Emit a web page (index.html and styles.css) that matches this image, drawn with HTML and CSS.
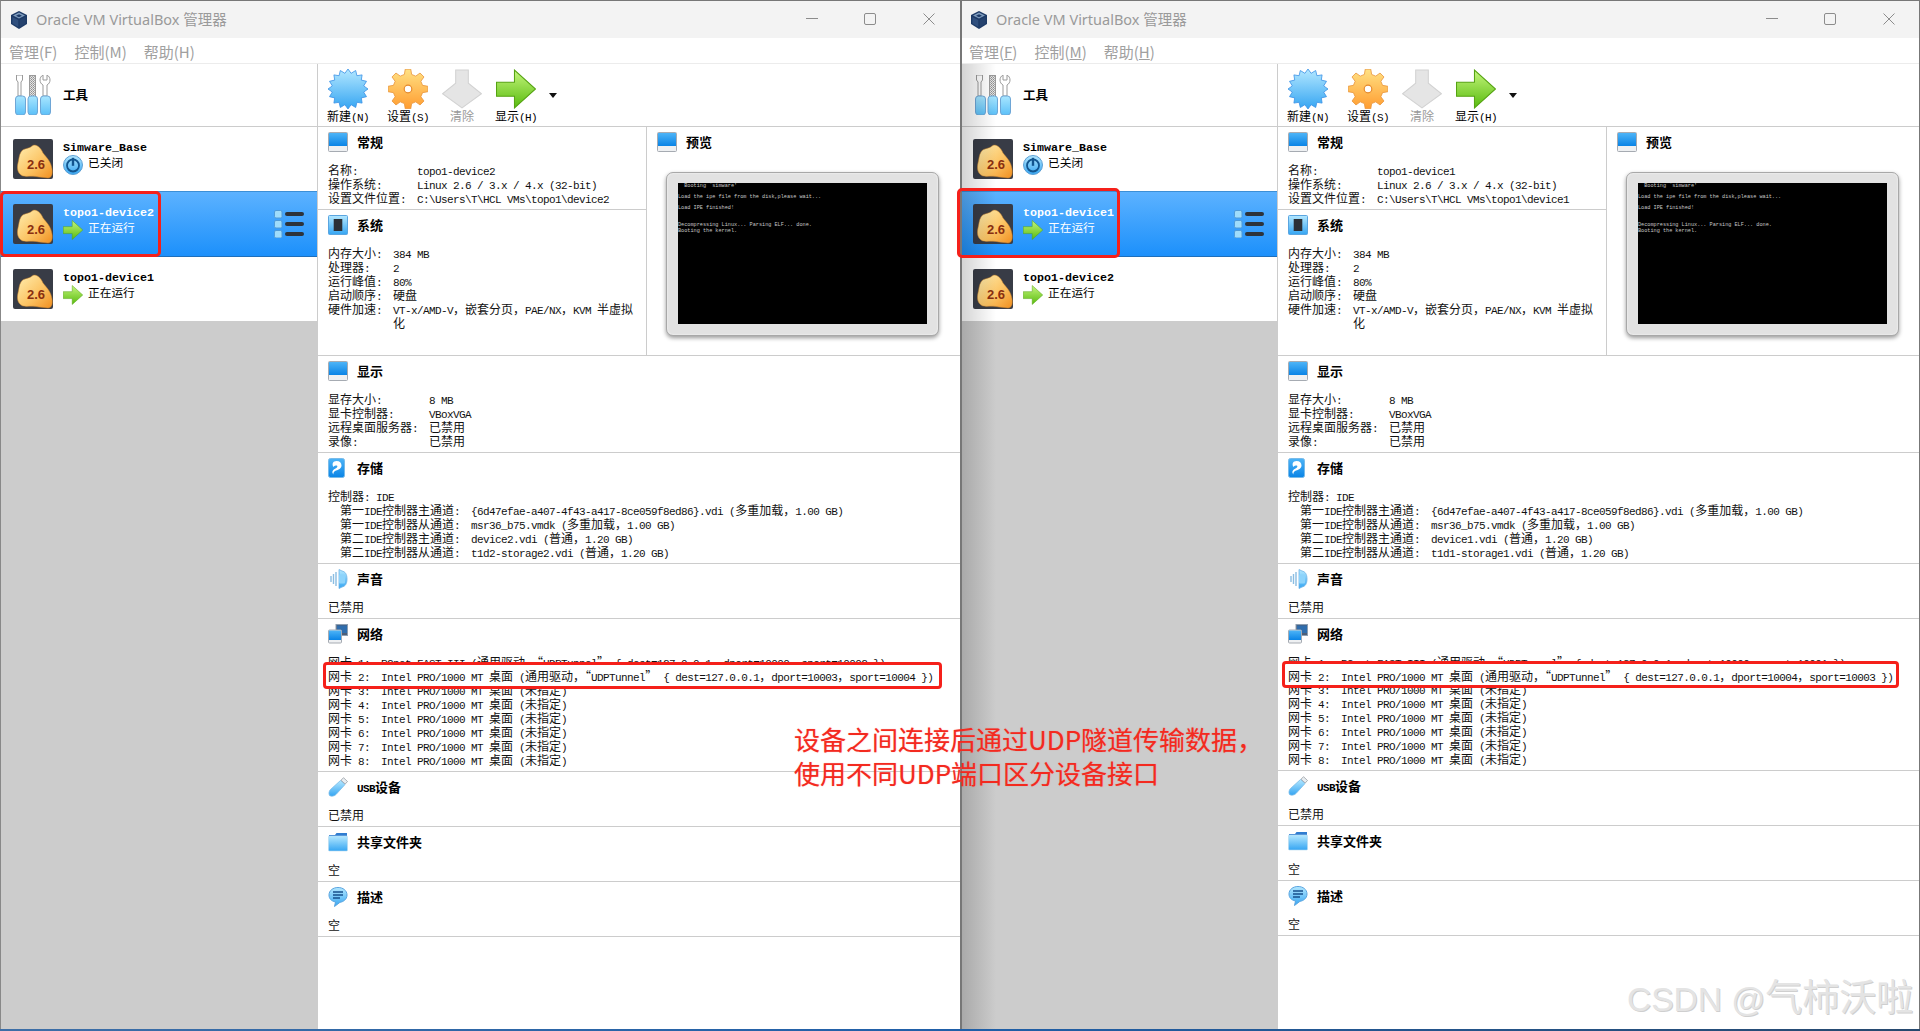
FILE: index.html
```html
<!DOCTYPE html>
<html lang="zh-CN">
<head>
<meta charset="utf-8">
<title>Oracle VM VirtualBox 管理器</title>
<link rel="stylesheet" href="styles.css">
</head>
<body>
<svg class="defs" xmlns="http://www.w3.org/2000/svg">
  <defs>
    <linearGradient id="g-blue" x1="0" y1="0" x2="0" y2="1"><stop offset="0" stop-color="#b4e8ff"/><stop offset="1" stop-color="#35a5f2"/></linearGradient>
    <linearGradient id="g-screen" x1="0" y1="0" x2="0" y2="1"><stop offset="0" stop-color="#4db4f7"/><stop offset="1" stop-color="#0a84e6"/></linearGradient>
    <linearGradient id="g-orange" x1="0" y1="0" x2="0" y2="1"><stop offset="0" stop-color="#ffe184"/><stop offset="1" stop-color="#ff9c30"/></linearGradient>
    <linearGradient id="g-blob" x1="0" y1="0" x2="1" y2="1"><stop offset="0" stop-color="#ffeeb0"/><stop offset=".55" stop-color="#fcc566"/><stop offset="1" stop-color="#f08f20"/></linearGradient>
    <linearGradient id="g-green" x1="0" y1="0" x2="0" y2="1"><stop offset="0" stop-color="#c4f57c"/><stop offset="1" stop-color="#58bb0e"/></linearGradient>
    <linearGradient id="g-handle" x1="0" y1="0" x2="0" y2="1"><stop offset="0" stop-color="#a9e6ff"/><stop offset="1" stop-color="#5cc0f8"/></linearGradient>
    <pattern id="p-file" width="2" height="2" patternUnits="userSpaceOnUse"><rect width="2" height="2" fill="#e4e4e4"/><rect width="1" height="1" fill="#8f8f8f"/><rect x="1" y="1" width="1" height="1" fill="#a8a8a8"/></pattern>
    <symbol id="i-logo" viewBox="0 0 16 18">
      <path d="M8 0 16 4v9l-8 5-8-5V4z" fill="#1d3a66"/>
      <path d="M8 1.500 14 4.600 8 7.600 2 4.600z" fill="#7f9cbe"/>
      <path d="M8 3.200 11 4.700 8 6.200 5 4.700z" fill="#1d3a66"/>
      <path d="M1.400 6 7.300 9v7L1.400 12.400z" fill="#304f7d"/>
      <path d="M14.600 6 8.700 9v7l5.900-3.600z" fill="#25426e"/>
    </symbol>
    <symbol id="i-tools" viewBox="0 0 37 40">
      <path d="M3 21V7L1.500 5V0h6v5L6 7v14z" fill="#fff" stroke="#9a9a9a"/>
      <rect x="14.500" y="0.500" width="6" height="21" fill="url(#p-file)" stroke="#9a9a9a"/>
      <path d="M28 21V10c-2-1-3-3-3-5 0-2 1-4 3-5v5h4V0c2 1 3 3 3 5 0 2-1 4-3 5v11z" fill="#fff" stroke="#9a9a9a"/>
      <rect x="0.500" y="21" width="10" height="19" rx="3" fill="url(#g-handle)" stroke="#6ea6d6"/>
      <rect x="13" y="21" width="9.500" height="19" rx="3" fill="url(#g-handle)" stroke="#6ea6d6"/>
      <rect x="25.500" y="21" width="10" height="19" rx="3" fill="url(#g-handle)" stroke="#6ea6d6"/>
    </symbol>
    <symbol id="i-new" viewBox="0 0 40 40">
      <polygon points="40,20 35.700,23.100 38.500,27.700 33.300,28.900 34.100,34.100 28.900,33.300 27.700,38.500 23.100,35.700 20,40 16.900,35.700 12.300,38.500 11.100,33.300 5.900,34.100 6.700,28.900 1.500,27.700 4.300,23.100 0,20 4.300,16.900 1.500,12.300 6.700,11.100 5.900,5.900 11.100,6.700 12.300,1.500 16.900,4.300 20,0 23.100,4.300 27.700,1.500 28.900,6.700 34.100,5.900 33.300,11.100 38.500,12.300 35.700,16.900" fill="url(#g-blue)" stroke="#3a91e6" stroke-width=".8"/>
    </symbol>
    <symbol id="i-gear" viewBox="0 0 40 40">
      <polygon points="16.370,5.450 17.220,.2 22.780,.2 23.630,5.450 27.730,7.140 32.040,4.030 35.970,7.960 32.860,12.270 34.550,16.370 39.800,17.220 39.800,22.780 34.550,23.630 32.860,27.730 35.970,32.040 32.040,35.970 27.730,32.860 23.630,34.550 22.780,39.800 17.220,39.800 16.370,34.550 12.270,32.860 7.960,35.970 4.030,32.040 7.140,27.730 5.450,23.630 .2,22.780 .2,17.220 5.450,16.370 7.140,12.270 4.030,7.960 7.960,4.030 12.270,7.140" fill="url(#g-orange)" stroke="#e9943a" stroke-width=".8"/>
      <circle cx="20" cy="20" r="3.800" fill="#fff" stroke="#e58a2c" stroke-width="1.200"/>
    </symbol>
    <symbol id="i-clear" viewBox="0 0 38 37">
      <polygon points="13,0.500 25,0.500 25,13 37.500,23 19,36.500 0.500,23 13,13" fill="#e5e5e5" stroke="#d2d2d2"/>
    </symbol>
    <symbol id="i-show" viewBox="0 0 39 38">
      <polygon points="0.500,12.500 18,12.500 18,0.500 38.500,19 18,37.500 18,26 0.500,26" fill="url(#g-green)" stroke="#55a312"/>
    </symbol>
    <symbol id="i-power" viewBox="0 0 20 20">
      <circle cx="10" cy="10" r="9.500" fill="url(#g-blue)" stroke="#5c9fd4"/>
      <circle cx="10" cy="10.500" r="6" fill="none" stroke="#12558f" stroke-width="1.800"/>
      <rect x="8.800" y="2.800" width="2.400" height="8" fill="#12558f"/>
    </symbol>
    <symbol id="i-vm" viewBox="0 0 40 40">
      <rect width="40" height="40" rx="2" fill="#383c46"/>
      <path d="M8 13C10 9 16 10 19 7 23 4 28 9 30 14 33 18 38 22 39 30 40 36 38 39 35 39L26 38C18 36 12 39 8 36 4 33 4 28 5 24 6 20 6 16 8 13Z" fill="url(#g-blob)" stroke="#c7812c" stroke-width=".5"/>
      <text x="23" y="30" class="vmnum">2.6</text>
    </symbol>
    <symbol id="i-list" viewBox="0 0 30 28">
      <g fill="#9fdcfb" stroke="#4f9ad8"><rect x=".5" y=".5" width="7.500" height="7.500" rx="1.500"/><rect x=".5" y="10.500" width="7.500" height="7.500" rx="1.500"/><rect x=".5" y="20.500" width="7.500" height="7.500" rx="1.500"/></g>
      <g fill="#2e333a"><rect x="11" y="2" width="19" height="4" rx="2"/><rect x="11" y="12" width="19" height="4" rx="2"/><rect x="11" y="22" width="19" height="4" rx="2"/></g>
    </symbol>
    <symbol id="i-mon" viewBox="0 0 20 20">
      <rect x=".5" y=".5" width="19" height="19" rx="1" fill="#eef0f2" stroke="#a6abb2"/>
      <rect x="1" y="1" width="18" height="13" fill="url(#g-screen)"/>
    </symbol>
    <symbol id="i-sys" viewBox="0 0 20 20">
      <rect x=".5" y=".5" width="19" height="19" rx="1" fill="url(#g-blue)" stroke="#5aa5e0"/>
      <rect x="6" y="4" width="8" height="12" fill="#2b3138"/>
      <path d="M5 5h10M5 7h10M5 9h10M5 11h10M5 13h10M5 15h10" stroke="#2b3138" stroke-width=".6"/>
    </symbol>
    <symbol id="i-disk" viewBox="0 0 20 20">
      <rect x=".5" y=".5" width="16" height="19" rx="2" fill="url(#g-screen)" stroke="#79bbe9"/>
      <path d="M8.500 3c3.300 0 5 2 5 4.500S11 12 8 12.500C6 13 5 15 5.500 16.500 3 14 5 11.500 7.500 10.500 9.500 9.800 10 8 8.700 7.600 7 7 6 8 5.500 9 3.500 6 5 3 8.500 3z" fill="#fff"/>
    </symbol>
    <symbol id="i-audio" viewBox="0 0 20 20">
      <path d="M11 .5 14 2c3 .5 5 3 5 8s-2 7.500-5 8l-3 1.500z" fill="url(#g-blue)" stroke="#6fb2e4" stroke-width=".8"/>
      <rect x="11" y="5.500" width="6" height="9" rx="1" fill="#8cd3fb"/>
      <path d="M8 3v14M5.500 5v10M3 7v6" stroke="#8bbde2" stroke-width="1.400"/>
    </symbol>
    <symbol id="i-net" viewBox="0 0 20 20">
      <rect x="8" y=".5" width="11.500" height="11" fill="#4d5f78" stroke="#8e9fb2"/>
      <rect x="9" y="1.500" width="10" height="7.500" fill="#2f6dad"/>
      <rect x=".5" y="6" width="13" height="13" rx="1" fill="#eef0f2" stroke="#a6abb2"/>
      <rect x="1" y="6.500" width="12" height="9.500" fill="url(#g-screen)"/>
    </symbol>
    <symbol id="i-usb" viewBox="0 0 20 20">
      <path d="M12.500 3.500 17 7.500 8 17.500C6 19.500 3 19.500 1.500 18.500 .5 16.500 1 14 2.500 12.500z" fill="url(#g-blue)" stroke="#79bbe9" stroke-width=".8"/>
      <path d="M13 3.200 15.500.7 19.500 4.500 17.200 7z" fill="#e9edf0" stroke="#8d949c" stroke-width=".7"/>
    </symbol>
    <symbol id="i-folder" viewBox="0 0 20 20">
      <path d="M1 3h6l1.500-2H19v4H1z" fill="#2f7cd0"/>
      <rect x=".5" y="4" width="19" height="15" rx="1" fill="url(#g-blue)" stroke="#b5d9ef" stroke-width=".6"/>
    </symbol>
    <symbol id="i-desc" viewBox="0 0 20 20">
      <path d="M10 .5c5 0 9 3 9 7.500s-4 7-7 7.300L6.500 19.500 7.500 15C3 14 1 11.500 1 8 1 3.500 5 .5 10 .5z" fill="url(#g-blue)" stroke="#5aa5e0"/>
      <path d="M5 5h10M5 8h10M5 11h7" stroke="#17508c" stroke-width="1.500"/>
    </symbol>
  </defs>
</svg>

<main class="desk">
  <section class="win win-a">
    <header class="title">
      <svg class="logo"><use href="#i-logo"/></svg>
      <span class="title-t">Oracle VM VirtualBox 管理器</span>
      <span class="ctl ctl-min"></span><span class="ctl ctl-max"></span>
      <svg class="ctl-x" viewBox="0 0 12 12"><path d="M.5.5l11 11M11.500.5l-11 11"/></svg>
    </header>
    <nav class="menu"><span>管理(F)</span><span>控制(M)</span><span>帮助(H)</span></nav>
    <div class="body">
      <aside class="left">
        <div class="tools"><svg class="tools-i"><use href="#i-tools"/></svg><b>工具</b></div>
        <div class="vm"><svg class="vm-i"><use href="#i-vm"/></svg><div class="vm-t"><span class="vm-n">Simware_Base</span><div class="vm-s"><svg class="st-i"><use href="#i-power"/></svg><span>已关闭</span></div></div></div>
        <div class="vm vm-sel"><svg class="vm-i"><use href="#i-vm"/></svg><div class="vm-t"><span class="vm-n">topo1-device2</span><div class="vm-s"><svg class="st-i"><use href="#i-show"/></svg><span>正在运行</span></div></div><svg class="list-i"><use href="#i-list"/></svg></div>
        <div class="vm"><svg class="vm-i"><use href="#i-vm"/></svg><div class="vm-t"><span class="vm-n">topo1-device1</span><div class="vm-s"><svg class="st-i"><use href="#i-show"/></svg><span>正在运行</span></div></div></div>
      </aside>
      <div class="right">
        <div class="toolbar">
          <div class="tb tb-first"><svg class="tb-i"><use href="#i-new"/></svg><span>新建<i>(N)</i></span></div>
          <div class="tb"><svg class="tb-i"><use href="#i-gear"/></svg><span>设置<i>(S)</i></span></div>
          <div class="tb tb-off"><svg class="tb-i"><use href="#i-clear"/></svg><span>清除</span></div>
          <div class="tb"><svg class="tb-i"><use href="#i-show"/></svg><span>显示<i>(H)</i></span></div>
          <span class="caret"></span>
        </div>
        <div class="top">
          <div class="top-l">
            <section class="sec">
              <div class="hd"><svg class="ico"><use href="#i-mon"/></svg><b>常规</b></div>
              <div class="kv"><span>名称<i>:</i></span><span><i>topo1-device2</i></span><span>操作系统<i>:</i></span><span><i>Linux 2.6 / 3.x / 4.x (32-bit)</i></span><span>设置文件位置<i>:</i></span><span><i>C:\Users\T\HCL VMs\topo1\device2</i></span></div>
            </section>
            <section class="sec sec-last">
              <div class="hd"><svg class="ico"><use href="#i-sys"/></svg><b>系统</b></div>
              <div class="kv"><span>内存大小<i>:</i></span><span><i>384 MB</i></span><span>处理器<i>:</i></span><span><i>2</i></span><span>运行峰值<i>:</i></span><span><i>80%</i></span><span>启动顺序<i>:</i></span><span>硬盘</span><span>硬件加速<i>:</i></span><span><i>VT-x/AMD-V</i>，嵌套分页，<i>PAE/NX</i>，<i>KVM </i>半虚拟化</span></div>
            </section>
          </div>
          <section class="prev">
            <div class="hd"><svg class="ico"><use href="#i-mon"/></svg><b>预览</b></div>
            <div class="screen-o"><pre class="screen">  Booting `simware'

Load the ipe file from the disk,please wait...

Load IPE finished!


Decompressing Linux... Parsing ELF... done.
Booting the kernel.</pre></div>
          </section>
        </div>
        <section class="sec">
          <div class="hd"><svg class="ico"><use href="#i-mon"/></svg><b>显示</b></div>
          <div class="kv"><span>显存大小<i>:</i></span><span><i>8 MB</i></span><span>显卡控制器<i>:</i></span><span><i>VBoxVGA</i></span><span>远程桌面服务器<i>:</i></span><span>已禁用</span><span>录像<i>:</i></span><span>已禁用</span></div>
        </section>
        <section class="sec">
          <div class="hd"><svg class="ico"><use href="#i-disk"/></svg><b>存储</b></div>
          <div class="full">控制器<i>: IDE</i></div>
          <div class="kv kv-in"><span>第一<i>IDE</i>控制器主通道<i>:</i></span><span><i>{6d47efae-a407-4f43-a417-8ce059f8ed86}.vdi (</i>多重加载，<i>1.00 GB)</i></span><span>第一<i>IDE</i>控制器从通道<i>:</i></span><span><i>msr36_b75.vmdk (</i>多重加载，<i>1.00 GB)</i></span><span>第二<i>IDE</i>控制器主通道<i>:</i></span><span><i>device2.vdi (</i>普通，<i>1.20 GB)</i></span><span>第二<i>IDE</i>控制器从通道<i>:</i></span><span><i>t1d2-storage2.vdi (</i>普通，<i>1.20 GB)</i></span></div>
        </section>
        <section class="sec">
          <div class="hd"><svg class="ico"><use href="#i-audio"/></svg><b>声音</b></div>
          <div class="full">已禁用</div>
        </section>
        <section class="sec">
          <div class="hd"><svg class="ico"><use href="#i-net"/></svg><b>网络</b></div>
          <div class="kv">
            <span>网卡<i> 1:</i></span><span><i>PCnet-FAST III (</i>通用驱动，“<i>UDPTunnel</i>”<i> { dest=127.0.0.1</i>，<i>dport=10000</i>，<i>sport=10002 })</i></span>
            <div class="hl"><span>网卡<i> 2:</i></span><span><i>Intel PRO/1000 MT </i>桌面<i> (</i>通用驱动，“<i>UDPTunnel</i>”<i> { dest=127.0.0.1</i>，<i>dport=10003</i>，<i>sport=10004 })</i></span></div>
            <span>网卡<i> 3:</i></span><span><i>Intel PRO/1000 MT </i>桌面<i> (</i>未指定<i>)</i></span>
            <span>网卡<i> 4:</i></span><span><i>Intel PRO/1000 MT </i>桌面<i> (</i>未指定<i>)</i></span>
            <span>网卡<i> 5:</i></span><span><i>Intel PRO/1000 MT </i>桌面<i> (</i>未指定<i>)</i></span>
            <span>网卡<i> 6:</i></span><span><i>Intel PRO/1000 MT </i>桌面<i> (</i>未指定<i>)</i></span>
            <span>网卡<i> 7:</i></span><span><i>Intel PRO/1000 MT </i>桌面<i> (</i>未指定<i>)</i></span>
            <span>网卡<i> 8:</i></span><span><i>Intel PRO/1000 MT </i>桌面<i> (</i>未指定<i>)</i></span>
          </div>
        </section>
        <section class="sec">
          <div class="hd"><svg class="ico"><use href="#i-usb"/></svg><b><i>USB</i>设备</b></div>
          <div class="full">已禁用</div>
        </section>
        <section class="sec">
          <div class="hd"><svg class="ico"><use href="#i-folder"/></svg><b>共享文件夹</b></div>
          <div class="full">空</div>
        </section>
        <section class="sec">
          <div class="hd"><svg class="ico"><use href="#i-desc"/></svg><b>描述</b></div>
          <div class="full">空</div>
        </section>
      </div>
    </div>
    <div class="mark"></div>
  </section>

  <section class="win win-b">
    <header class="title">
      <svg class="logo"><use href="#i-logo"/></svg>
      <span class="title-t">Oracle VM VirtualBox 管理器</span>
      <span class="ctl ctl-min"></span><span class="ctl ctl-max"></span>
      <svg class="ctl-x" viewBox="0 0 12 12"><path d="M.5.5l11 11M11.500.5l-11 11"/></svg>
    </header>
    <nav class="menu"><span>管理(<u>F</u>)</span><span>控制(<u>M</u>)</span><span>帮助(<u>H</u>)</span></nav>
    <div class="body">
      <aside class="left">
        <div class="tools"><svg class="tools-i"><use href="#i-tools"/></svg><b>工具</b></div>
        <div class="vm"><svg class="vm-i"><use href="#i-vm"/></svg><div class="vm-t"><span class="vm-n">Simware_Base</span><div class="vm-s"><svg class="st-i"><use href="#i-power"/></svg><span>已关闭</span></div></div></div>
        <div class="vm vm-sel"><svg class="vm-i"><use href="#i-vm"/></svg><div class="vm-t"><span class="vm-n">topo1-device1</span><div class="vm-s"><svg class="st-i"><use href="#i-show"/></svg><span>正在运行</span></div></div><svg class="list-i"><use href="#i-list"/></svg></div>
        <div class="vm"><svg class="vm-i"><use href="#i-vm"/></svg><div class="vm-t"><span class="vm-n">topo1-device2</span><div class="vm-s"><svg class="st-i"><use href="#i-show"/></svg><span>正在运行</span></div></div></div>
      </aside>
      <div class="right">
        <div class="toolbar">
          <div class="tb tb-first"><svg class="tb-i"><use href="#i-new"/></svg><span>新建<i>(N)</i></span></div>
          <div class="tb"><svg class="tb-i"><use href="#i-gear"/></svg><span>设置<i>(S)</i></span></div>
          <div class="tb tb-off"><svg class="tb-i"><use href="#i-clear"/></svg><span>清除</span></div>
          <div class="tb"><svg class="tb-i"><use href="#i-show"/></svg><span>显示<i>(H)</i></span></div>
          <span class="caret"></span>
        </div>
        <div class="top">
          <div class="top-l">
            <section class="sec">
              <div class="hd"><svg class="ico"><use href="#i-mon"/></svg><b>常规</b></div>
              <div class="kv"><span>名称<i>:</i></span><span><i>topo1-device1</i></span><span>操作系统<i>:</i></span><span><i>Linux 2.6 / 3.x / 4.x (32-bit)</i></span><span>设置文件位置<i>:</i></span><span><i>C:\Users\T\HCL VMs\topo1\device1</i></span></div>
            </section>
            <section class="sec sec-last">
              <div class="hd"><svg class="ico"><use href="#i-sys"/></svg><b>系统</b></div>
              <div class="kv"><span>内存大小<i>:</i></span><span><i>384 MB</i></span><span>处理器<i>:</i></span><span><i>2</i></span><span>运行峰值<i>:</i></span><span><i>80%</i></span><span>启动顺序<i>:</i></span><span>硬盘</span><span>硬件加速<i>:</i></span><span><i>VT-x/AMD-V</i>，嵌套分页，<i>PAE/NX</i>，<i>KVM </i>半虚拟化</span></div>
            </section>
          </div>
          <section class="prev">
            <div class="hd"><svg class="ico"><use href="#i-mon"/></svg><b>预览</b></div>
            <div class="screen-o"><pre class="screen">  Booting `simware'

Load the ipe file from the disk,please wait...

Load IPE finished!


Decompressing Linux... Parsing ELF... done.
Booting the kernel.</pre></div>
          </section>
        </div>
        <section class="sec">
          <div class="hd"><svg class="ico"><use href="#i-mon"/></svg><b>显示</b></div>
          <div class="kv"><span>显存大小<i>:</i></span><span><i>8 MB</i></span><span>显卡控制器<i>:</i></span><span><i>VBoxVGA</i></span><span>远程桌面服务器<i>:</i></span><span>已禁用</span><span>录像<i>:</i></span><span>已禁用</span></div>
        </section>
        <section class="sec">
          <div class="hd"><svg class="ico"><use href="#i-disk"/></svg><b>存储</b></div>
          <div class="full">控制器<i>: IDE</i></div>
          <div class="kv kv-in"><span>第一<i>IDE</i>控制器主通道<i>:</i></span><span><i>{6d47efae-a407-4f43-a417-8ce059f8ed86}.vdi (</i>多重加载，<i>1.00 GB)</i></span><span>第一<i>IDE</i>控制器从通道<i>:</i></span><span><i>msr36_b75.vmdk (</i>多重加载，<i>1.00 GB)</i></span><span>第二<i>IDE</i>控制器主通道<i>:</i></span><span><i>device1.vdi (</i>普通，<i>1.20 GB)</i></span><span>第二<i>IDE</i>控制器从通道<i>:</i></span><span><i>t1d1-storage1.vdi (</i>普通，<i>1.20 GB)</i></span></div>
        </section>
        <section class="sec">
          <div class="hd"><svg class="ico"><use href="#i-audio"/></svg><b>声音</b></div>
          <div class="full">已禁用</div>
        </section>
        <section class="sec">
          <div class="hd"><svg class="ico"><use href="#i-net"/></svg><b>网络</b></div>
          <div class="kv">
            <span>网卡<i> 1:</i></span><span><i>PCnet-FAST III (</i>通用驱动，“<i>UDPTunnel</i>”<i> { dest=127.0.0.1</i>，<i>dport=10000</i>，<i>sport=10001 })</i></span>
            <div class="hl"><span>网卡<i> 2:</i></span><span><i>Intel PRO/1000 MT </i>桌面<i> (</i>通用驱动，“<i>UDPTunnel</i>”<i> { dest=127.0.0.1</i>，<i>dport=10004</i>，<i>sport=10003 })</i></span></div>
            <span>网卡<i> 3:</i></span><span><i>Intel PRO/1000 MT </i>桌面<i> (</i>未指定<i>)</i></span>
            <span>网卡<i> 4:</i></span><span><i>Intel PRO/1000 MT </i>桌面<i> (</i>未指定<i>)</i></span>
            <span>网卡<i> 5:</i></span><span><i>Intel PRO/1000 MT </i>桌面<i> (</i>未指定<i>)</i></span>
            <span>网卡<i> 6:</i></span><span><i>Intel PRO/1000 MT </i>桌面<i> (</i>未指定<i>)</i></span>
            <span>网卡<i> 7:</i></span><span><i>Intel PRO/1000 MT </i>桌面<i> (</i>未指定<i>)</i></span>
            <span>网卡<i> 8:</i></span><span><i>Intel PRO/1000 MT </i>桌面<i> (</i>未指定<i>)</i></span>
          </div>
        </section>
        <section class="sec">
          <div class="hd"><svg class="ico"><use href="#i-usb"/></svg><b><i>USB</i>设备</b></div>
          <div class="full">已禁用</div>
        </section>
        <section class="sec">
          <div class="hd"><svg class="ico"><use href="#i-folder"/></svg><b>共享文件夹</b></div>
          <div class="full">空</div>
        </section>
        <section class="sec">
          <div class="hd"><svg class="ico"><use href="#i-desc"/></svg><b>描述</b></div>
          <div class="full">空</div>
        </section>
      </div>
    </div>
    <div class="mark"></div>
  </section>

  <p class="note">设备之间连接后通过UDP隧道传输数据，<br>使用不同UDP端口区分设备接口</p>
  <p class="wm">CSDN @<span>气柿沃啦</span></p>
</main>
<div class="taskbar"></div>
</body>
</html>
```

FILE: styles.css
```css
* { box-sizing: border-box; }
html, body { margin: 0; height: 100%; }
body {
  overflow: hidden;
  background: #fff;
  color: #111;
  font: 12px/14px "Noto Sans CJK SC", "Liberation Sans", sans-serif;
}
i { font: 11px/0 "Liberation Mono", monospace; letter-spacing: -.6px; white-space: pre-wrap; }
b i { font: bold 11px/0 "Liberation Mono", monospace; }
.defs { position: absolute; width: 0; height: 0; overflow: hidden; }
.vmnum { font: bold 13px "Liberation Sans", sans-serif; fill: #8a2f10; text-anchor: middle; }

.desk { position: relative; display: flex; height: 1029px; }
.taskbar { height: 2px; background: linear-gradient(90deg, #3d6ea6, #1f5fa8 50%, #27496e); }

.win {
  position: relative;
  display: flex;
  flex-direction: column;
  width: 960px;
  border-top: 1px solid #777;
  border-left: 1px solid #888;
  background: #fff;
  --lw: 317px;
  --lp: 12px;
}
.win-b { border-left: 2px solid #777; border-right: 1px solid #777; --lw: 316px; --lp: 11px; }

.title { position: relative; display: flex; align-items: center; flex: none; height: 37px; padding-left: 10px; background: #f3f3f3; }
.win-b .title { padding-left: 9px; }
.logo { width: 16px; height: 18px; flex: none; }
.title-t { margin: -2px 0 0 9px; color: #9a9a9a; font: 14.500px/20px "Noto Sans", "Noto Sans CJK SC", sans-serif; }
.ctl-min { position: absolute; left: 805px; top: 17px; width: 12px; height: 1px; background: #8c8c8c; }
.ctl-max { position: absolute; left: 863px; top: 12px; width: 12px; height: 12px; border: 1px solid #8c8c8c; border-radius: 2px; }
.ctl-x { position: absolute; left: 922px; top: 12px; width: 12px; height: 12px; fill: none; stroke: #8c8c8c; }
.win-b .ctl-min { left: 804px; }
.win-b .ctl-max { left: 862px; }
.win-b .ctl-x { left: 921px; }

.menu { display: flex; gap: 17px; flex: none; height: 26px; padding: 3px 0 0 8px; border-bottom: 1px solid #ececec; color: #a0a0a0; font: 15px/22px "Noto Sans CJK SC", "Noto Sans", sans-serif; }
.win-b .menu { padding-left: 7px; }

.body { display: flex; flex: 1; min-height: 0; }

.left { flex: none; width: var(--lw); background: #ccc; border-right: 1px solid #ccc; position: relative; }
.win-b .left::after { content: ""; position: absolute; inset: 0 auto 0 0; width: 34px; background: linear-gradient(90deg, rgba(0,0,0,.17), rgba(0,0,0,0)); pointer-events: none; }
.tools { display: flex; align-items: center; height: 63px; padding-left: calc(var(--lp) + 2px); background: #fff; border-bottom: 1px solid #ccc; }
.tools-i { width: 37px; height: 40px; flex: none; }
.tools b { margin-left: 11px; font-size: 12.500px; color: #000; }
.vm { display: flex; align-items: center; height: 65px; padding-left: var(--lp); background: #fff; border-bottom: 1px solid #ccc; color: #000; }
.vm-i { width: 40px; height: 40px; flex: none; }
.vm-t { margin-left: 10px; padding-bottom: 2px; display: flex; flex-direction: column; }
.vm-n { font: bold 11.670px/14px "Liberation Mono", monospace; }
.vm-s { display: flex; align-items: center; height: 20px; }
.vm-s span { margin: -6px 0 0 5px; font-size: 11.700px; }
.st-i { width: 20px; height: 20px; flex: none; }
.vm-sel { background: linear-gradient(#5cb2ff, #1c90fb); border-top: 1px solid #3c8fd6; border-bottom: 1px solid #1e6fbb; color: #fff; margin-top: -1px; height: 66px; }
.list-i { width: 30px; height: 28px; margin-left: auto; margin-right: 13px; }

.right { flex: 1; min-width: 0; }
.toolbar { display: flex; align-items: flex-start; height: 63px; padding: 5px 0 0 3px; border-bottom: 1px solid #ccc; }
.tb { display: flex; flex-direction: column; align-items: center; width: 54px; color: #000; }
.tb-first { margin-right: 6px; }
.tb-i { display: block; width: 40px; height: 40px; }
.tb span { line-height: 14px; }
.tb-off { color: #9a9a9a; }
.caret { width: 0; height: 0; margin: 24px 0 0 6px; border: solid transparent; border-width: 5px 4.500px 0; border-top-color: #111; }

.top { display: grid; grid-template-columns: 329px 1fr; height: 229px; border-bottom: 1px solid #ccc; }
.top-l { display: flex; flex-direction: column; border-right: 1px solid #ccc; }
.sec { padding: 0 10px 4px; border-bottom: 1px solid #ccc; }
.sec-last { flex: 1; border-bottom: 0; }
.hd { display: flex; align-items: center; height: 30px; margin-bottom: 6px; }
.hd b { margin-left: 9px; font-size: 13px; color: #000; }
.ico { width: 20px; height: 20px; flex: none; }
.kv { display: grid; grid-template-columns: auto 1fr; column-gap: 11px; }
.kv-in { padding-left: 12px; }
.full { line-height: 14px; }

.hl {
  position: relative;
  grid-column: 1 / -1;
  display: grid;
  grid-template-columns: subgrid;
  margin: -7px 8px -6px -5px;
  padding: 4px 0 3px 2px;
  border: 3px solid #f5201a;
  border-radius: 4px;
  background: #fff;
}
.win-b .hl { margin: -8px 10px -6px -6px; padding: 5px 0 2px 3px; }

.prev { padding: 0 0 0 10px; }
.screen-o { width: 273px; height: 164px; margin: 15px 0 0 9px; padding: 10px 11px 12px; border: 1px solid #a8a8a8; border-radius: 7px; background: #e2e2e2; box-shadow: 0 2px 4px rgba(0,0,0,.4), inset 0 0 2px #fff; }
.screen { height: 141px; margin: 0; padding: 1px 0 0; overflow: hidden; background: #000; color: #c8c8c8; font: 5.200px/5.600px "Liberation Mono", monospace; }

.mark { position: absolute; left: -1px; top: 190px; width: 161px; height: 66px; border: 3.500px solid #f5201a; border-radius: 5px; pointer-events: none; }
.win-b .mark { left: -5px; top: 187px; width: 163px; height: 70px; }

.note { position: absolute; left: 794px; top: 722px; z-index: 5; margin: 0; color: #f32a1f; font: 26px/34px "Noto Sans CJK SC", sans-serif; white-space: nowrap; text-shadow: 0 0 1px rgba(255,70,60,.5); }
.wm { position: absolute; left: 1627px; top: 974px; z-index: 5; margin: 0; color: #e4e4e4; font: 33.500px/42px "Liberation Sans", sans-serif; white-space: nowrap; text-shadow: 1px 1px 0 #cfcfcf; }
.wm span { font: 37px/42px "Noto Sans CJK SC", sans-serif; }
```
